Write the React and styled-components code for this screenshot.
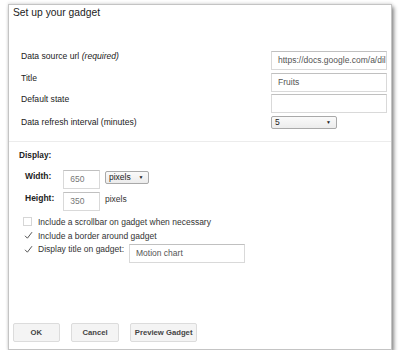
import React from "react";
import styled, { createGlobalStyle } from "styled-components";

const Global = createGlobalStyle`
  html, body { margin: 0; padding: 0; background: #fff; }
  body { font-family: Arial, "Liberation Sans", sans-serif; color: #222; }
  * { box-sizing: border-box; }
`;

const Dialog = styled.div`
  margin: 4px 0 0 8px;
  width: 384px;
  height: 346px;
  background: #fff;
  border: 1px solid #c4c4c4;
  box-shadow: 2px 3px 4px rgba(0, 0, 0, 0.45), 0 -1px 3px rgba(0, 0, 0, 0.12);
  display: flex;
  flex-direction: column;
`;

const Title = styled.div`
  font-size: 10.3px;
  line-height: 14px;
  padding: 1px 0 0 4px;
  color: #222;
`;

const FormGrid = styled.div`
  margin-top: 31px;
  padding: 0 4px 0 12px;
  display: grid;
  grid-template-columns: 1fr 116px;
  row-gap: 2.5px;
  align-items: start;
`;

const Label = styled.div`
  font-size: 8.6px;
  line-height: 10px;
  color: #222;
  align-self: ${(p) => (p.$center ? "center" : "start")};
  em { font-style: italic; }
`;

const TextInput = styled.div`
  width: ${(p) => p.$w || "116px"};
  height: 19px;
  flex: none;
  border: 1px solid #d9d9d9;
  border-top-color: #c0c0c0;
  background: #fff;
  font-size: 8.5px;
  line-height: 17px;
  padding-left: 6px;
  color: ${(p) => (p.$muted ? "#777" : "#555")};
  white-space: nowrap;
  overflow: hidden;
`;

const Select = styled.div`
  width: ${(p) => p.$w};
  height: 13px;
  margin-top: ${(p) => p.$mt || "0"};
  border: 1px solid #a9a9a9;
  border-radius: 2px;
  background: linear-gradient(#fafafa, #ececec);
  display: flex;
  align-items: center;
  justify-content: space-between;
  padding: 0 5px 0 3px;
  font-size: 8.5px;
  color: #222;
`;

const Arrow = styled.span`
  font-size: 5px;
  color: #222;
`;

const Separator = styled.div`
  margin-top: 12px;
  height: 1px;
  background: #ececec;
`;

const Section = styled.div`
  padding: 8px 0 0 10px;
`;

const SectionTitle = styled.div`
  font-size: 8.3px;
  font-weight: bold;
  line-height: 10px;
  color: #222;
`;

const DimGrid = styled.div`
  margin: 10px 0 0 6px;
  display: grid;
  grid-template-columns: 33.7px 37.3px auto;
  column-gap: 4.5px;
  row-gap: 3px;
  align-items: start;
`;

const DimLabel = styled.div`
  font-size: 8.5px;
  font-weight: bold;
  line-height: 10px;
  padding-top: 1px;
  color: #222;
`;

const Unit = styled.div`
  font-size: 8.5px;
  line-height: 10px;
  padding-top: 2px;
  color: #333;
`;

const Checks = styled.div`
  margin-top: 4px;
  padding-left: 4px;
  display: flex;
  flex-direction: column;
`;

const CheckRow = styled.div`
  display: flex;
  align-items: ${(p) => (p.$top ? "flex-start" : "center")};
  height: ${(p) => p.$h || "14px"};
  padding-top: ${(p) => (p.$top ? "1px" : "0")};
`;

const Box = styled.span`
  width: 9px;
  height: 9px;
  flex: none;
  margin-top: ${(p) => (p.$top ? "1px" : "0")};
  border: 1px solid ${(p) => (p.$checked ? "transparent" : "#d6d6d6")};
  position: relative;
  display: inline-block;
  svg { position: absolute; left: 0; top: -1px; }
`;

const CheckText = styled.span`
  font-size: 8.5px;
  line-height: 10px;
  margin-left: 6px;
  color: #333;
  white-space: nowrap;
`;

const InlineInput = styled(TextInput)`
  margin-left: 5px;
`;

const Spacer = styled.div`
  flex: 1;
`;

const Buttons = styled.div`
  display: flex;
  gap: 11px;
  padding: 0 0 7.5px 3.7px;
`;

const Button = styled.div`
  width: ${(p) => p.$w};
  height: 19px;
  border: 1px solid #dcdcdc;
  border-radius: 2px;
  background: #f4f4f4;
  font-size: 7.7px;
  font-weight: bold;
  color: #444;
  display: flex;
  align-items: center;
  justify-content: center;
`;

const Check = ({ checked, top }) => (
  <Box $checked={checked} $top={top}>
    {checked && (
      <svg width="9" height="9" viewBox="0 0 9 9">
        <path d="M1 4.8 L3.4 7.2 L8 1.2" fill="none" stroke="#555" strokeWidth="1" />
      </svg>
    )}
  </Box>
);

export default function App() {
  return (
    <>
      <Global />
      <Dialog>
        <Title>Set up your gadget</Title>
        <FormGrid>
          <Label>Data source url <em>(required)</em></Label>
          <TextInput>https://docs.google.com/a/dil</TextInput>
          <Label>Title</Label>
          <TextInput>Fruits</TextInput>
          <Label>Default state</Label>
          <TextInput />
          <Label $center>Data refresh interval (minutes)</Label>
          <Select $w="66px">
            <span>5</span>
            <Arrow>▼</Arrow>
          </Select>
        </FormGrid>
        <Separator />
        <Section>
          <SectionTitle>Display:</SectionTitle>
          <DimGrid>
            <DimLabel>Width:</DimLabel>
            <TextInput $w="37.3px" $muted>650</TextInput>
            <Select $w="44.5px" $mt="1px">
              <span>pixels</span>
              <Arrow>▼</Arrow>
            </Select>
            <DimLabel>Height:</DimLabel>
            <TextInput $w="37.3px" $muted>350</TextInput>
            <Unit>pixels</Unit>
          </DimGrid>
          <Checks>
            <CheckRow>
              <Check />
              <CheckText>Include a scrollbar on gadget when necessary</CheckText>
            </CheckRow>
            <CheckRow>
              <Check checked />
              <CheckText>Include a border around gadget</CheckText>
            </CheckRow>
            <CheckRow $h="22px" $top>
              <Check checked top />
              <CheckText>Display title on gadget:</CheckText>
              <InlineInput $w="116px">Motion chart</InlineInput>
            </CheckRow>
          </Checks>
        </Section>
        <Spacer />
        <Buttons>
          <Button $w="47.3px">OK</Button>
          <Button $w="48px">Cancel</Button>
          <Button $w="67.3px">Preview Gadget</Button>
        </Buttons>
      </Dialog>
    </>
  );
}
